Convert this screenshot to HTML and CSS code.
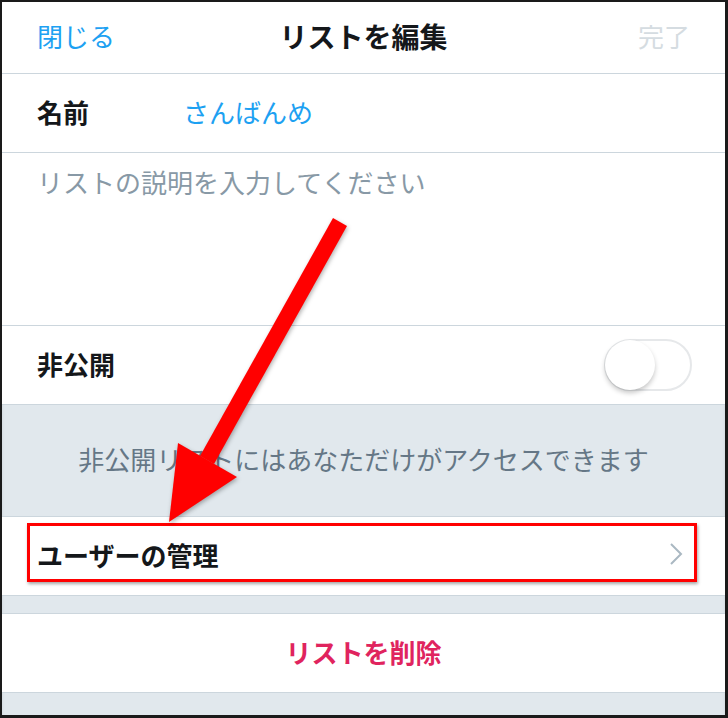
FILE: index.html
```html
<!DOCTYPE html>
<html lang="ja">
<head>
  <meta charset="UTF-8" />
  <meta name="viewport" content="width=device-width, initial-scale=1.0"/>
  <title>リストを編集</title>
  <link rel="stylesheet" href="styles.css">
</head>
<body>

  <div class="frame">
    <!-- Header -->
    <div class="header">
      <span class="close">閉じる</span>
      <span class="title">リストを編集</span>
      <span class="done">完了</span>
    </div>

    <!-- Name -->
    <div class="row">
      <span class="label">名前</span>
      <span class="name-value">さんばんめ</span>
    </div>

    <!-- Description -->
    <div class="description">リストの説明を入力してください</div>

    <!-- Private -->
    <div class="row private-row">
      <span class="label">非公開</span>
      <div class="toggle"><div class="knob"></div></div>
    </div>

    <div class="note">非公開リストにはあなただけがアクセスできます</div>

    <div class="row members-row">
      <span class="label">ユーザーの管理</span>
      <svg class="chevron" width="14" height="24" viewBox="0 0 14 24">
        <polyline points="2,2 12,12 2,22" fill="none" stroke="#aab8c2" stroke-width="2"/>
      </svg>
    </div>

    <div class="spacer"></div>

    <div class="row delete-row">
      <span class="delete">リストを削除</span>
    </div>

    <div class="spacer bottom"></div>

    <!-- Annotation -->
    <div class="highlight"></div>
    <svg class="arrow" width="728" height="718" viewBox="0 0 728 718">
      <g fill="#ff0000">
        <polygon points="333,218 347,226 214,464 200,456"/>
        <polygon points="178,443 237,477 169,522"/>
      </g>
    </svg>
  </div>

</body>
</html>
```

FILE: styles.css
```css
body {
  margin: 0;
  font-family: "Noto Sans CJK JP", "Noto Sans", sans-serif;
  background-color: #1a1a1a;
}
.frame {
  position: relative;
  width: 723px;
  height: 713px;
  border-style: solid;
  border-color: #1a1a1a;
  border-width: 2px 3px 3px 2px;
  background-color: #e1e8ed;
  box-shadow: inset 0 4px 4px -2px rgba(0, 0, 0, 0.25);
  overflow: hidden;
}
.header {
  height: 67px;
  display: grid;
  grid-template-columns: 1fr auto 1fr;
  align-items: center;
  padding: 0 35px 4px;
  background-color: #fff;
  border-bottom: 1px solid #ccd6dd;
  font-size: 26px;
}
.close {
  color: #1da1f2;
}
.title {
  font-weight: bold;
  font-size: 28px;
  color: #14171a;
}
.done {
  color: #d5dce1;
  text-align: right;
}
.row {
  height: 74px;
  display: flex;
  align-items: center;
  padding: 0 35px 4px;
  background-color: #fff;
  border-bottom: 1px solid #ccd6dd;
  font-size: 26px;
}
.label {
  font-weight: bold;
  color: #14171a;
}
.name-value {
  color: #1da1f2;
  margin-left: 94px;
}
.description {
  height: 162px;
  padding: 10px 35px 0;
  background-color: #fff;
  border-bottom: 1px solid #ccd6dd;
  font-size: 26px;
  color: #8899a6;
}
.private-row {
  justify-content: space-between;
  padding-right: 33px;
  padding-bottom: 0;
  height: 78px;
}
.private-row .label {
  margin-bottom: 4px;
}
.toggle {
  width: 84px;
  height: 48px;
  border: 2px solid #e6e8ea;
  border-radius: 26px;
  position: relative;
}
.knob {
  position: absolute;
  left: -1px;
  top: -1px;
  width: 50px;
  height: 50px;
  border-radius: 50%;
  background-color: #fff;
  box-shadow: 0 3px 5px rgba(0, 0, 0, 0.22);
}
.note {
  height: 107px;
  padding-bottom: 4px;
  display: flex;
  align-items: center;
  justify-content: center;
  font-size: 26px;
  color: #657786;
  border-bottom: 1px solid #ccd6dd;
}
.members-row {
  justify-content: space-between;
  padding-right: 42px;
}
.spacer {
  height: 17px;
  border-bottom: 1px solid #ccd6dd;
}
.spacer.bottom {
  border-bottom: none;
}
.delete-row {
  justify-content: center;
}
.delete {
  color: #e0245e;
  font-weight: bold;
}
.highlight {
  position: absolute;
  left: 25px;
  top: 521px;
  width: 664px;
  height: 53px;
  border: 3px solid #ff0000;
  box-shadow: 1px 2px 3px rgba(0, 0, 0, 0.35);
}
.arrow {
  position: absolute;
  left: -2px;
  top: -2px;
  filter: drop-shadow(1px 2px 2px rgba(0, 0, 0, 0.3));
}
```
